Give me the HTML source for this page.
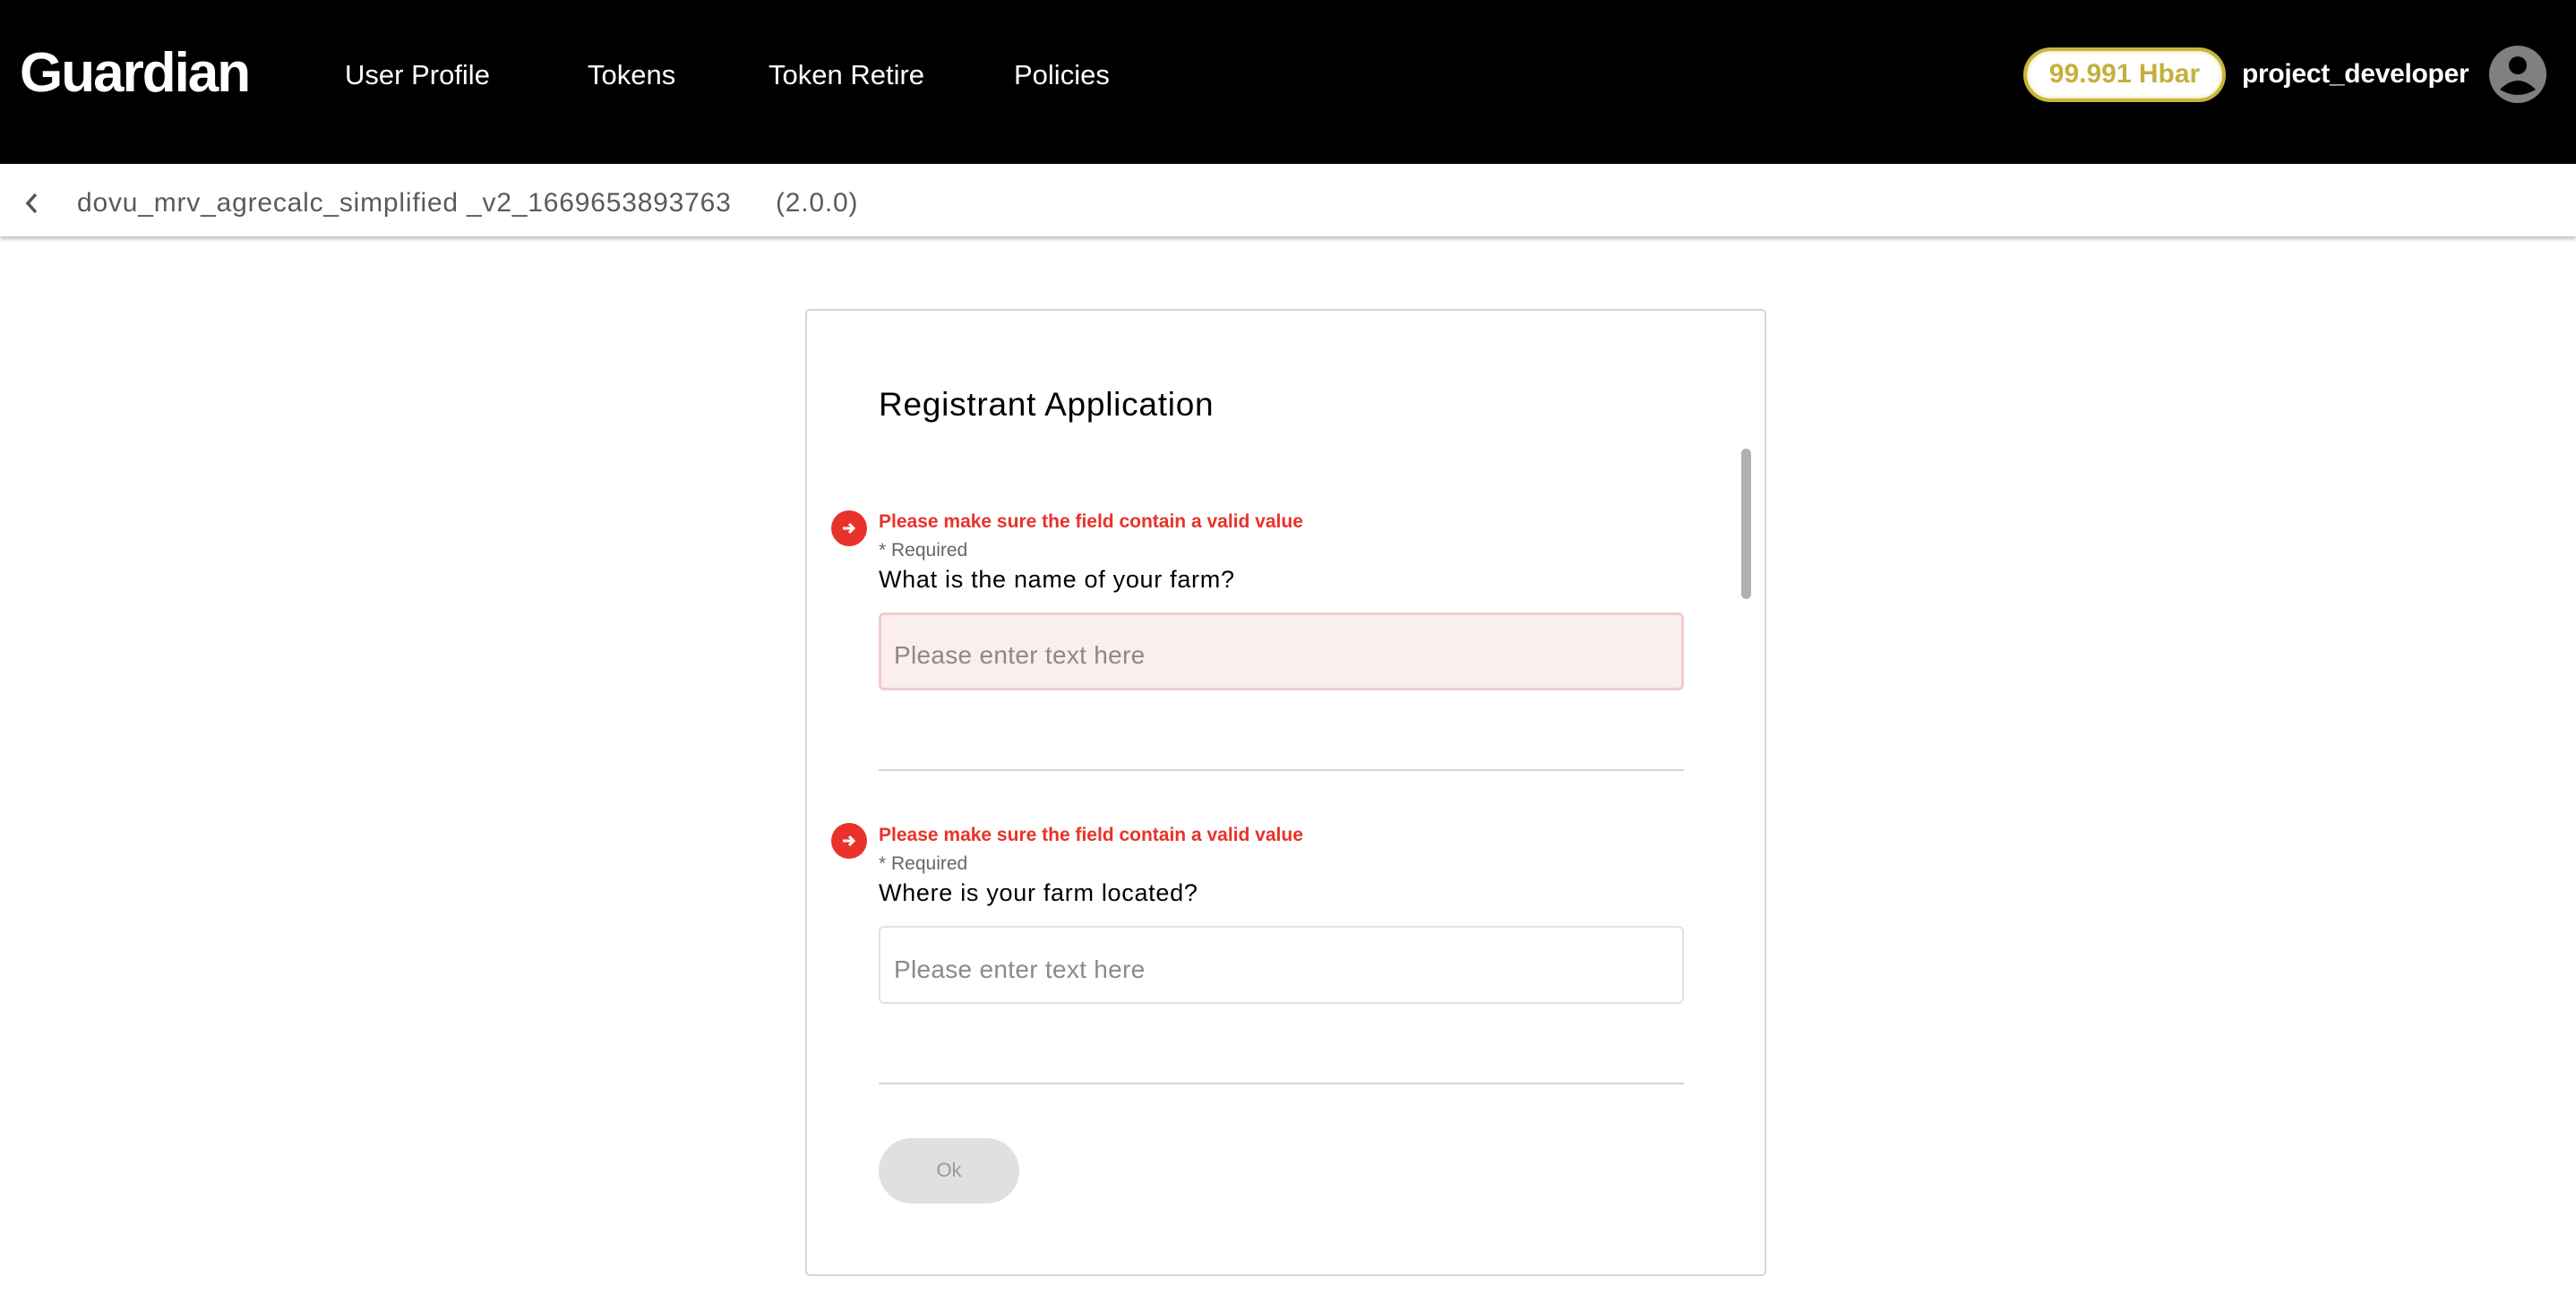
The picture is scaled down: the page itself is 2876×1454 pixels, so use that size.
<!DOCTYPE html>
<html><head><meta charset="utf-8"><style>
*{margin:0;padding:0;box-sizing:border-box}
body{width:2876px;height:1454px;background:#fff;font-family:"Liberation Sans",Arial,sans-serif;position:relative;overflow:hidden}
.a{position:absolute;white-space:nowrap;line-height:1.2}
.hdr{position:absolute;left:0;top:0;width:2876px;height:183px;background:#000}
.sub{position:absolute;left:0;top:183px;width:2876px;height:81px;background:#fff;box-shadow:0 3px 4px rgba(0,0,0,.25)}
.nav{color:#fff;font-size:31px;top:65px}
.card{position:absolute;left:899px;top:345px;width:1073px;height:1080px;border:2px solid #d6d6d6;border-radius:5px}
.err{color:#e8322a;font-size:21px;font-weight:bold;letter-spacing:0px}
.req{color:#666;font-size:21px}
.q{color:#000;font-size:27px;letter-spacing:0.7px}
.ico{position:absolute;width:40px;height:40px;border-radius:50%;background:#e8322a}
.inp{position:absolute;left:981px;width:899px;height:87px;border-radius:6px}
.ph{color:#8a8a8a;font-size:28px}
.div{position:absolute;left:981px;width:899px;height:2px;background:#d4d4d4}
</style></head><body>
<div class="hdr"></div>
<div class="a" style="left:22px;top:45px;color:#fff;font-size:62px;font-weight:bold;letter-spacing:-2px">Guardian</div>
<div class="a nav" style="left:385px">User Profile</div>
<div class="a nav" style="left:656px">Tokens</div>
<div class="a nav" style="left:858px">Token Retire</div>
<div class="a nav" style="left:1132px">Policies</div>
<div style="position:absolute;left:2259px;top:53px;width:226px;height:61px;border:4px solid #c8b63a;border-radius:31px;background:#fff;box-shadow:inset 0 0 6px #e8e0a0"></div>
<div class="a" style="left:2259px;width:226px;text-align:center;top:65px;color:#c4b03e;font-size:30px;font-weight:bold">99.991 Hbar</div>
<div class="a" style="left:2503px;top:65px;color:#fff;font-size:30px;font-weight:bold;letter-spacing:-0.3px">project_developer</div>
<svg style="position:absolute;left:2778px;top:50px" width="66" height="66" viewBox="0 0 66 66">
<circle cx="33" cy="33" r="32" fill="#808080"/>
<circle cx="33" cy="23" r="10" fill="#000"/>
<path d="M13 50 Q33 30 53 50 Q33 62 13 50Z" fill="#000"/>
</svg>
<div class="sub"></div>
<svg style="position:absolute;left:26px;top:214px" width="20" height="26" viewBox="0 0 20 26"><path d="M14 3 L5 13 L14 23" stroke="#555" stroke-width="3.5" fill="none"/></svg>
<div class="a" style="left:86px;top:209px;color:#5a5a5a;font-size:30px;letter-spacing:0.8px">dovu_mrv_agrecalc_simplified _v2_1669653893763</div>
<div class="a" style="left:866px;top:209px;color:#5a5a5a;font-size:30px;letter-spacing:0.8px">(2.0.0)</div>
<div class="card"></div>
<div class="a" style="left:981px;top:430px;color:#000;font-size:37px;letter-spacing:0.75px">Registrant Application</div>
<div style="position:absolute;left:1944px;top:501px;width:11px;height:168px;border-radius:6px;background:#b0b0b0"></div>

<div class="ico" style="left:928px;top:570px"></div>
<svg style="position:absolute;left:936px;top:578px" width="24" height="24" viewBox="0 0 24 24"><path d="M5 12H17M12 7L17 12L12 17" stroke="#fff" stroke-width="3" fill="none"/></svg>
<div class="a err" style="left:981px;top:570px">Please make sure the field contain a valid value</div>
<div class="a req" style="left:981px;top:602px">* Required</div>
<div class="a q" style="left:981px;top:631px">What is the name of your farm?</div>
<div class="inp" style="top:684px;background:#fbeeee;border:3px solid #f0cccc"></div>
<div class="a ph" style="left:998px;top:715px;letter-spacing:0.3px">Please enter text here</div>
<div class="div" style="top:859px"></div>

<div class="ico" style="left:928px;top:919px"></div>
<svg style="position:absolute;left:936px;top:927px" width="24" height="24" viewBox="0 0 24 24"><path d="M5 12H17M12 7L17 12L12 17" stroke="#fff" stroke-width="3" fill="none"/></svg>
<div class="a err" style="left:981px;top:920px">Please make sure the field contain a valid value</div>
<div class="a req" style="left:981px;top:952px">* Required</div>
<div class="a q" style="left:981px;top:981px">Where is your farm located?</div>
<div class="inp" style="top:1034px;background:#fff;border:2px solid #e2e2e2"></div>
<div class="a ph" style="left:998px;top:1066px;letter-spacing:0.3px">Please enter text here</div>
<div class="div" style="top:1209px"></div>

<div style="position:absolute;left:981px;top:1271px;width:157px;height:73px;border-radius:37px;background:#e0e0e0"></div>
<div class="a" style="left:981px;width:157px;text-align:center;top:1294px;color:#9a9a9a;font-size:22px">Ok</div>
</body></html>
